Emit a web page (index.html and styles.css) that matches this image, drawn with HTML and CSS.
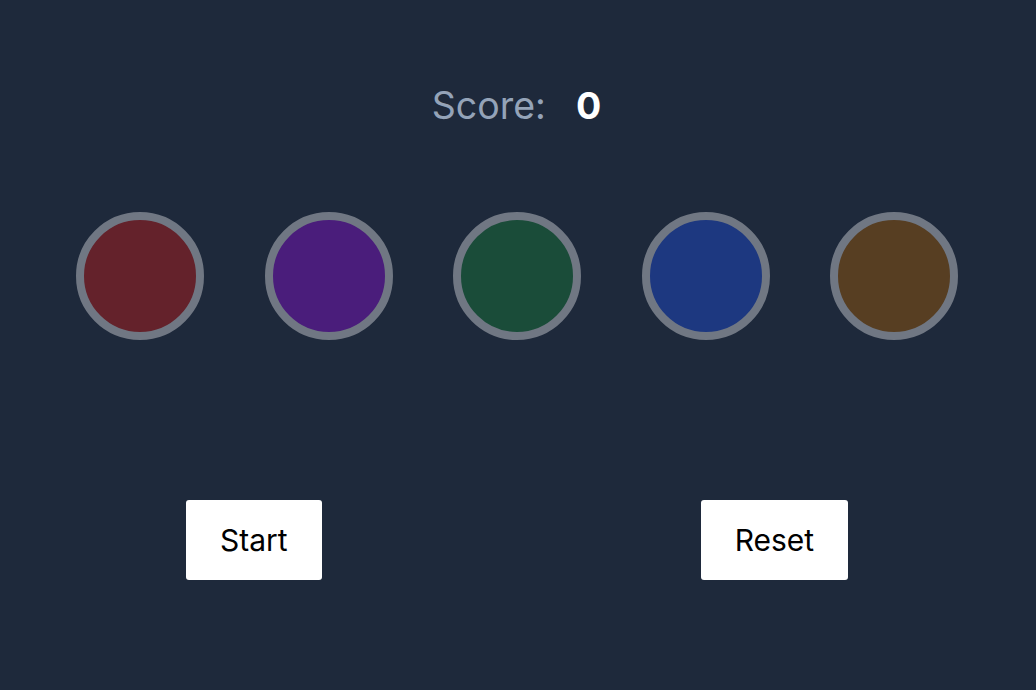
FILE: index.html
```html
<!DOCTYPE html>
<html lang="en">
<head>
<meta charset="utf-8">
<title>Simon</title>
<link rel="stylesheet" href="styles.css">
</head>
<body>
<main class="game">
  <div class="score">
    <span class="score-label">Score:</span>
    <span class="score-value">0</span>
  </div>
  <div class="pads">
    <div class="pad pad-red"></div>
    <div class="pad pad-purple"></div>
    <div class="pad pad-green"></div>
    <div class="pad pad-blue"></div>
    <div class="pad pad-brown"></div>
  </div>
  <div class="controls">
    <button class="btn">Start</button>
    <button class="btn">Reset</button>
  </div>
</main>
</body>
</html>
```
FILE: styles.css
```css
html, body {
  margin: 0;
  padding: 0;
  background: #1e293b;
  font-family: Inter, "Noto Sans", sans-serif;
}
.game {
  width: 1036px;
  height: 690px;
  display: flex;
  flex-direction: column;
}
.score {
  margin-top: 82px;
  height: 46px;
  display: flex;
  justify-content: center;
  align-items: center;
  gap: 30px;
  font-size: 37.5px;
  padding-right: 3px;
}
.score-label {
  color: #94a3b8;
}
.score-value {
  color: #ffffff;
  font-weight: 700;
}
.pads {
  margin-top: 84px;
  display: flex;
  justify-content: center;
  gap: 60.5px;
  margin-left: -2px;
}
.pad {
  width: 112px;
  height: 112px;
  border: 8px solid #707783;
  border-radius: 50%;
}
.pad-red { background: #64222b; }
.pad-purple { background: #4a1d7b; }
.pad-green { background: #1a4c39; }
.pad-blue { background: #1d3880; }
.pad-brown { background: #573e22; }
.controls {
  margin-top: 160px;
  display: flex;
  padding-left: 186px;
  gap: 379px;
}
.btn {
  height: 80px;
  padding: 0 34px;
  border: none;
  border-radius: 3px;
  background: #ffffff;
  color: #000000;
  font-family: Inter, "Noto Sans", sans-serif;
  font-size: 30px;
  line-height: 36px;
}
```
